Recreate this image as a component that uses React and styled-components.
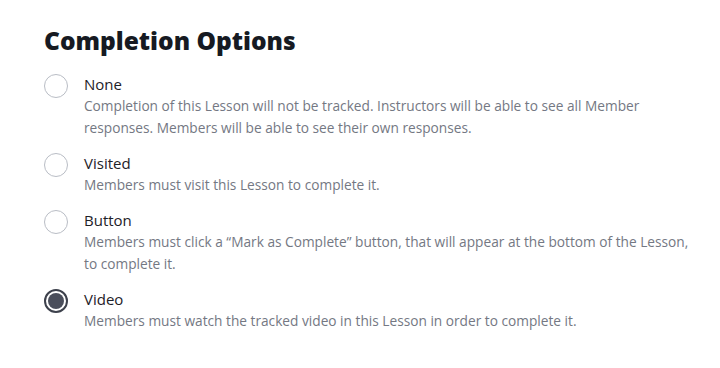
import React, { useState } from 'react'
import styled, { createGlobalStyle } from 'styled-components'

const GlobalStyle = createGlobalStyle`
  body {
    margin: 0;
    background: #fff;
    font-family: "Open Sans", "Noto Sans", sans-serif;
  }
`

const Wrapper = styled.div`
  padding: 24px 20px 20px 44px;
`

const Title = styled.h2`
  margin: 0 0 16px;
  font-size: 24.5px;
  font-weight: 800;
  color: #161a22;
`

const List = styled.div`
  display: flex;
  flex-direction: column;
  gap: 13px;
`

const Option = styled.label`
  display: flex;
  align-items: flex-start;
  gap: 16px;
  cursor: pointer;
`

const Radio = styled.span`
  flex: none;
  box-sizing: border-box;
  width: 24px;
  height: 24px;
  margin-top: 1px;
  border-radius: 50%;
  border: ${p => (p.checked ? '2px solid #3d414c' : '1px solid #b9bdc5')};
  background: #fff;
  display: flex;
  align-items: center;
  justify-content: center;

  &:after {
    content: "";
    display: ${p => (p.checked ? 'block' : 'none')};
    width: 16px;
    height: 16px;
    border-radius: 50%;
    background: #4a4e5b;
  }
`

const Text = styled.div`
  display: flex;
  flex-direction: column;
  max-width: 618px;
`

const Label = styled.div`
  font-size: 15px;
  line-height: 22px;
  color: #1e2128;
`

const Desc = styled.div`
  font-size: 13.7px;
  line-height: 22px;
  color: #747883;
`

const options = [
  {
    id: 'none',
    label: 'None',
    desc: 'Completion of this Lesson will not be tracked. Instructors will be able to see all Member responses. Members will be able to see their own responses.',
  },
  {
    id: 'visited',
    label: 'Visited',
    desc: 'Members must visit this Lesson to complete it.',
  },
  {
    id: 'button',
    label: 'Button',
    desc: 'Members must click a \u201cMark as Complete\u201d button, that will appear at the bottom of the Lesson, to complete it.',
  },
  {
    id: 'video',
    label: 'Video',
    desc: 'Members must watch the tracked video in this Lesson in order to complete it.',
  },
]

export default function App() {
  const [value, setValue] = useState('video')
  return (
    <Wrapper>
      <GlobalStyle />
      <Title>Completion Options</Title>
      <List>
        {options.map(o => (
          <Option key={o.id} onClick={() => setValue(o.id)}>
            <Radio checked={value === o.id} />
            <Text>
              <Label>{o.label}</Label>
              <Desc>{o.desc}</Desc>
            </Text>
          </Option>
        ))}
      </List>
    </Wrapper>
  )
}
